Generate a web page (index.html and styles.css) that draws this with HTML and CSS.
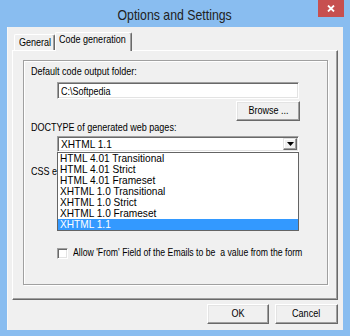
FILE: index.html
```html
<!DOCTYPE html>
<html>
<head>
<meta charset="utf-8">
<link rel="stylesheet" href="styles.css">
</head>
<body>
<div class="window">
  <div class="titlebar">
    <span class="title"><span class="t tc">Options and Settings</span></span>
    <div class="close">
      <svg width="8" height="7" viewBox="0 0 8 7"><path d="M1 0.5 L7 6.5 M7 0.5 L1 6.5" stroke="#fff" stroke-width="1.8" fill="none"/></svg>
    </div>
  </div>
  <div class="client">
    <div class="tabs">
      <div class="tab"><span class="t">General</span></div>
      <div class="tab active"><span class="t">Code generation</span></div>
    </div>
    <div class="panel">
      <div class="group">
        <div class="label"><span class="t">Default code output folder:</span></div>
        <div class="indent">
          <div class="field input-field"><span class="t">C:\Softpedia</span></div>
          <div class="browse-row"><div class="btn browse"><span class="t tc">Browse ...</span></div></div>
        </div>
        <div class="label"><span class="t">DOCTYPE of generated web pages:</span></div>
        <div class="indent">
          <div class="combo">
            <div class="field select-field">
              <span class="t big">XHTML 1.1</span>
              <span class="drop-btn"><svg width="7" height="4" viewBox="0 0 7 4"><path d="M0 0 H7 L3.5 4 Z" fill="#000"/></svg></span>
            </div>
            <ul class="list">
              <li><span class="t big">HTML 4.01 Transitional</span></li>
              <li><span class="t big">HTML 4.01 Strict</span></li>
              <li><span class="t big">HTML 4.01 Frameset</span></li>
              <li><span class="t big">XHTML 1.0 Transitional</span></li>
              <li><span class="t big">XHTML 1.0 Strict</span></li>
              <li><span class="t big">XHTML 1.0 Frameset</span></li>
              <li class="selected"><span class="t big">XHTML 1.1</span></li>
            </ul>
          </div>
        </div>
        <div class="label css-label"><span class="t">CSS el</span></div>
        <div class="indent check-row">
          <span class="checkbox"></span>
          <span class="check-label"><span class="t narrow">Allow 'From' Field of the Emails to be&nbsp; a value from the form</span></span>
        </div>
      </div>
    </div>
    <div class="buttons">
      <div class="btn ok"><span class="t tc">OK</span></div>
      <div class="btn cancel"><span class="t tc">Cancel</span></div>
    </div>
  </div>
</div>
</body>
</html>
```

FILE: styles.css
```css
* { box-sizing: border-box; }
html, body { margin: 0; padding: 0; }
body {
  font-family: "Liberation Sans", Arial, sans-serif;
  font-size: 11px;
  line-height: 13px;
  color: #000;
}
.t {
  display: inline-block;
  white-space: nowrap;
  transform: scaleX(0.82);
  transform-origin: 0 50%;
}
.tc { transform-origin: 50% 50%; }
.t.big { transform: scaleX(0.92); }
.t.narrow { transform: scaleX(0.79); }
.window {
  position: relative;
  width: 350px;
  height: 336px;
  background: #89bdf0;
  display: flex;
  flex-direction: column;
}
.titlebar {
  height: 27px;
  display: flex;
  justify-content: center;
  align-items: center;
}
.title {
  font-size: 15px;
  line-height: 17px;
  color: #222;
  padding-top: 1px;
}
.close {
  position: absolute;
  top: 0;
  right: 6px;
  width: 26px;
  height: 17px;
  background: #c75050;
  display: flex;
  align-items: center;
  justify-content: center;
}
.client {
  margin: 0 7px 6px;
  flex: 1;
  background: #f0f0f0;
  padding: 5px 5px 0 4px;
  display: flex;
  flex-direction: column;
  border-left: 1px solid #f8f8f8;
}
.tabs {
  display: flex;
  align-items: flex-end;
  height: 18px;
  padding-left: 2px;
  position: relative;
  z-index: 1;
}
.tab {
  height: 16px;
  width: 41px;
  padding: 1px 0 0 4px;
  border-top: 1px solid #fff;
  border-left: 1px solid #fff;
  border-right: 1px solid #696969;
  box-shadow: inset -1px 0 #a0a0a0;
  border-radius: 2px 2px 0 0;
  background: #f0f0f0;
  white-space: nowrap;
}
.tab.active {
  height: 19px;
  width: 77px;
  margin-bottom: -1px;
  padding: 0 0 0 3px;
}
.panel {
  height: 250px;
  border-top: 1px solid #fff;
  border-left: 1px solid #fff;
  border-right: 1px solid #696969;
  border-bottom: 1px solid #696969;
  box-shadow: inset -1px -1px #a0a0a0;
  padding: 9px 9px 0 10px;
}
.group {
  width: 305px;
  height: 225px;
  border: 1px solid #a0a0a0;
  box-shadow: inset 1px 1px #fff, 1px 1px #fff;
  padding: 4px 0 0 7px;
}
.indent {
  margin-left: 26px;
  width: 243px;
}
.field {
  width: 242px;
  height: 17px;
  background: #fff;
  border-top: 1px solid #a0a0a0;
  border-left: 1px solid #a0a0a0;
  border-right: 1px solid #fff;
  border-bottom: 1px solid #fff;
  box-shadow: inset 1px 1px #696969, inset -1px -1px #e3e3e3;
  padding: 2px 0 0 3px;
  line-height: 12px;
}
.input-field { margin-top: 4px; }
.browse-row {
  display: flex;
  justify-content: flex-end;
  margin-top: 2px;
}
.btn {
  height: 20px;
  display: flex;
  align-items: center;
  justify-content: center;
  padding-bottom: 1px;
  background: #f0f0f0;
  border-top: 1px solid #fff;
  border-left: 1px solid #fff;
  border-right: 1px solid #696969;
  border-bottom: 1px solid #696969;
  box-shadow: inset -1px -1px #a0a0a0, inset 1px 1px #e3e3e3;
}
.browse { width: 64px; }
.combo {
  position: relative;
  margin-top: 2px;
}
.select-field {
  height: 16px;
  display: flex;
  justify-content: space-between;
  padding: 1px 1px 0 3px;
  line-height: 13px;
}
.drop-btn {
  width: 14px;
  height: 12px;
  background: #f0f0f0;
  border-top: 1px solid #e3e3e3;
  border-left: 1px solid #e3e3e3;
  border-right: 1px solid #696969;
  border-bottom: 1px solid #696969;
  box-shadow: inset -1px -1px #a0a0a0, inset 1px 1px #fff;
  display: flex;
  align-items: center;
  justify-content: center;
}
.list {
  position: absolute;
  top: 100%;
  left: 0;
  width: 242px;
  margin: 0;
  padding: 0;
  list-style: none;
  background: #fff;
  border: 1px solid #646464;
  z-index: 2;
}
.list li {
  height: 11px;
  line-height: 11px;
  padding-left: 2px;
}
.list li.selected {
  background: #3399ff;
  color: #fff;
}
.css-label {
  margin-top: 13px;
}
.check-row {
  margin-top: 68px;
  width: auto;
  display: flex;
  align-items: center;
}
.checkbox {
  flex: none;
  width: 11px;
  height: 11px;
  background: #fff;
  border-top: 1px solid #a0a0a0;
  border-left: 1px solid #a0a0a0;
  border-right: 1px solid #fff;
  border-bottom: 1px solid #fff;
  box-shadow: inset 1px 1px #696969, inset -1px -1px #e3e3e3;
  margin-right: 5px;
  margin-top: 1px;
}
.check-label {
  white-space: nowrap;
  min-width: 0;
}
.buttons {
  display: flex;
  justify-content: flex-end;
  gap: 6px;
  margin-top: 4px;
}
.ok { width: 62px; }
.cancel { width: 63px; }
```
